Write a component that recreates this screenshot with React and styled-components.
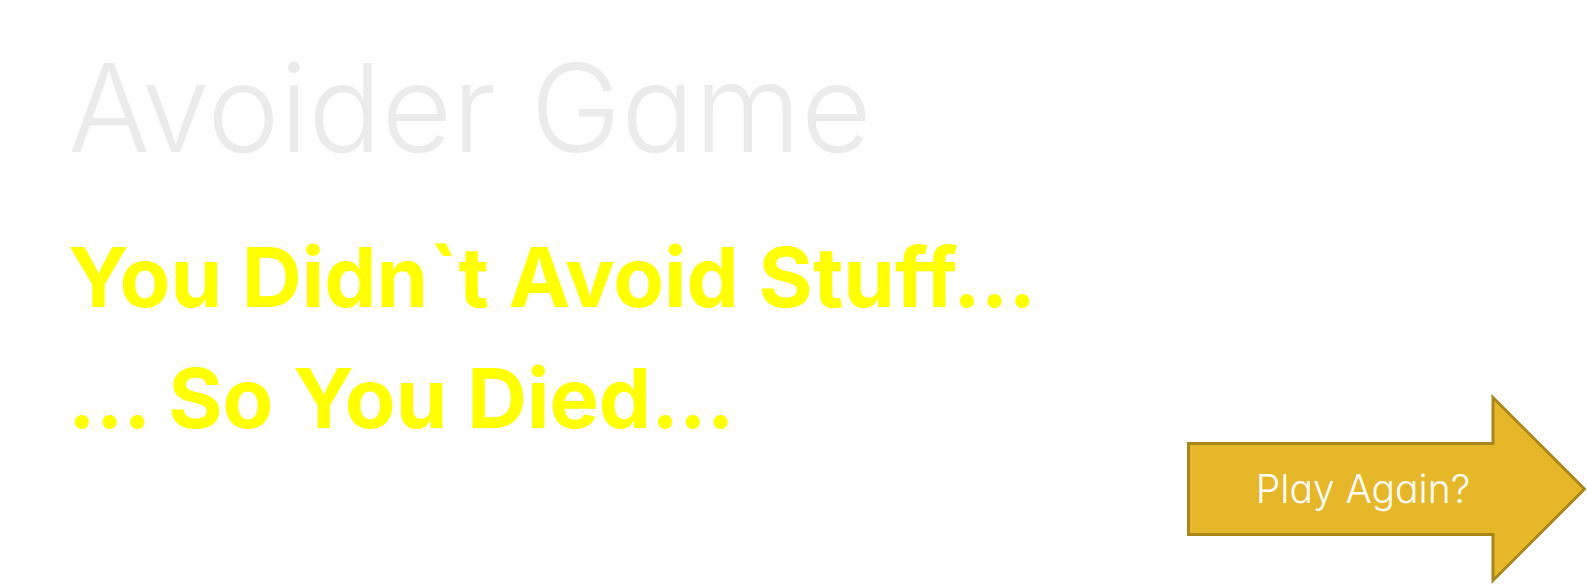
import React from "react";
import styled, { createGlobalStyle } from "styled-components";

const GlobalStyle = createGlobalStyle`
  *, *::before, *::after { box-sizing: border-box; }
  body {
    margin: 0;
    background: #ffffff;
    font-family: Inter, "Open Sans", sans-serif;
    font-feature-settings: "cv11" 1;
  }
`;

const Screen = styled.main`
  display: flex;
  flex-direction: column;
  min-height: 100vh;
  padding: 40px 0 0 68px;
`;

const Title = styled.h1`
  margin: 0;
  color: #ebebeb;
  font-size: 122px;
  font-weight: 300;
  line-height: 136px;
`;

const Message = styled.p`
  margin: 41px 0 0;
  color: #ffff00;
  font-size: 83px;
  font-weight: 700;
  line-height: 121px;
`;

const Line = styled.span`
  display: block;
`;

const PlayButton = styled.button`
  display: grid;
  align-self: flex-end;
  align-items: center;
  width: 400px;
  height: 192px;
  margin-top: -66px;
  padding: 0;
  border: 0;
  background: none;
  color: #ffffff;
  font-family: inherit;
  font-size: 39px;
  font-weight: 300;
  line-height: 48px;
  font-feature-settings: inherit;
  cursor: pointer;
`;

const Arrow = styled.svg`
  grid-area: 1 / 1;
  display: block;
  width: 100%;
  height: 100%;
`;

const Label = styled.span`
  grid-area: 1 / 1;
  padding-right: 48px;
  text-align: center;
`;

export default function App() {
  return (
    <>
      <GlobalStyle />
      <Screen>
        <Title>Avoider Game</Title>
        <Message>
          <Line>You Didn`t Avoid Stuff…</Line>
          <Line>… So You Died…</Line>
        </Message>
        <PlayButton type="button">
          <Arrow viewBox="0 0 400 192" aria-hidden="true">
            <path
              d="M1.5 50.5H306V4.5L397.5 96L306 187.5V141.5H1.5Z"
              fill="#e6b729"
              stroke="#a9861a"
              strokeWidth="3"
            />
          </Arrow>
          <Label>Play Again?</Label>
        </PlayButton>
      </Screen>
    </>
  );
}
